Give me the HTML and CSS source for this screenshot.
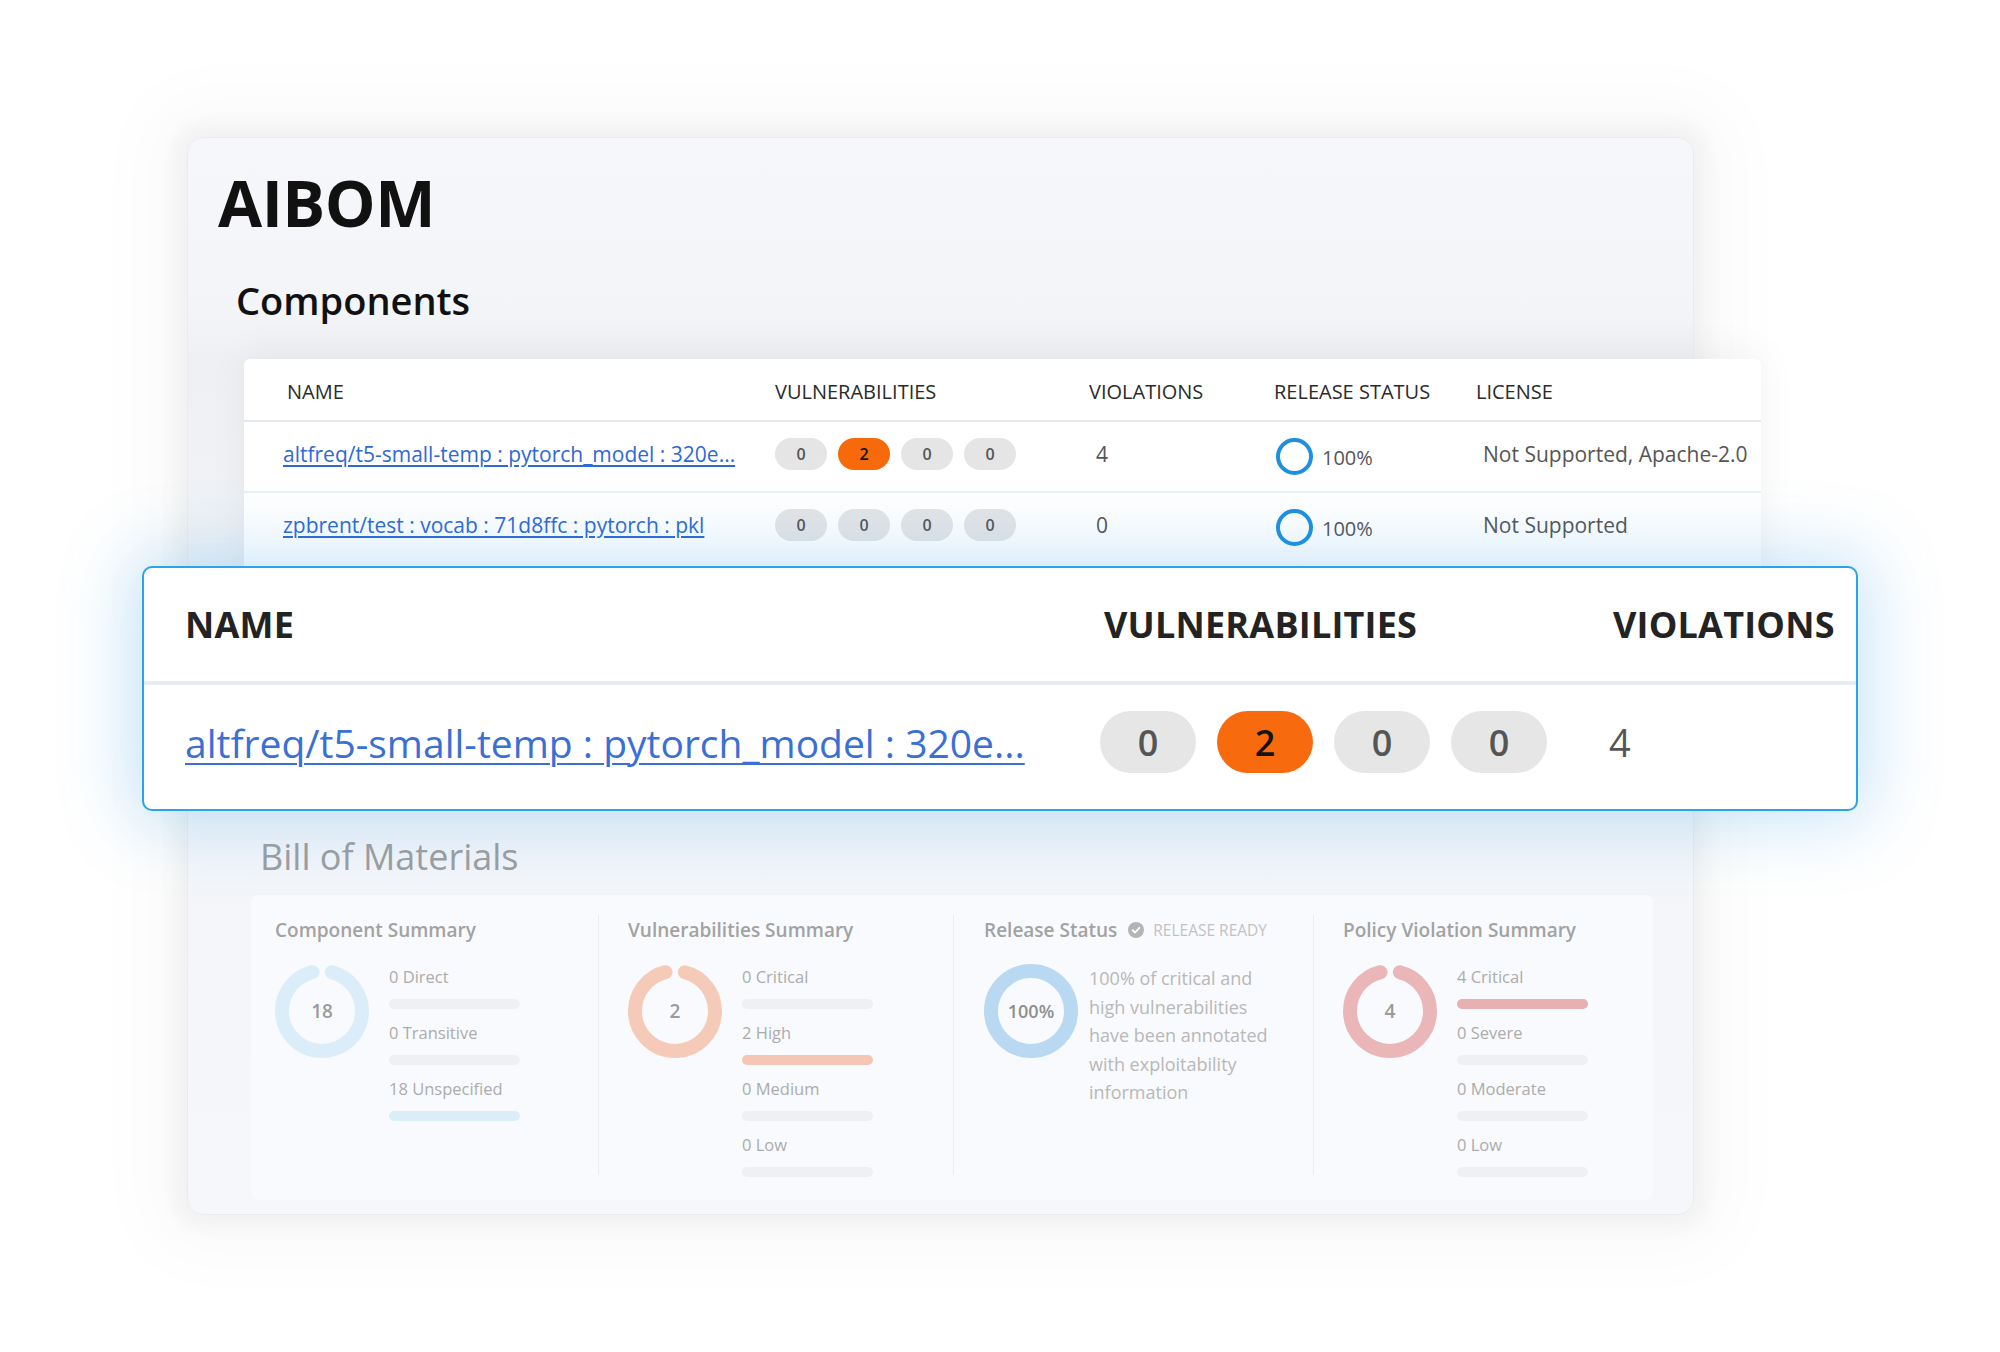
FILE: index.html
```html
<!DOCTYPE html>
<html>
<head>
<meta charset="utf-8">
<link rel="stylesheet" href="styles.css">
</head>
<body>
<div class="stage">
  <div class="main-card">
    <h1 class="title">AIBOM</h1>
    <h2 class="section">Components</h2>
    <div class="table-card">
      <div class="trow thead">
        <div class="th th-name">NAME</div>
        <div class="th">VULNERABILITIES</div>
        <div class="th">VIOLATIONS</div>
        <div class="th">RELEASE STATUS</div>
        <div class="th">LICENSE</div>
      </div>
      <div class="trow tbody first">
        <div class="td"><a class="link">altfreq/t5-small-temp : pytorch_model : 320e...</a></div>
        <div class="td badges"><span class="badge">0</span><span class="badge hot">2</span><span class="badge">0</span><span class="badge">0</span></div>
        <div class="td num">4</div>
        <div class="td status"><span class="ring"></span><span class="pct">100%</span></div>
        <div class="td lic">Not Supported, Apache-2.0</div>
      </div>
      <div class="trow tbody">
        <div class="td"><a class="link">zpbrent/test : vocab : 71d8ffc : pytorch : pkl</a></div>
        <div class="td badges"><span class="badge">0</span><span class="badge">0</span><span class="badge">0</span><span class="badge">0</span></div>
        <div class="td num">0</div>
        <div class="td status"><span class="ring"></span><span class="pct">100%</span></div>
        <div class="td lic">Not Supported</div>
      </div>
    </div>

    <h2 class="bom-title">Bill of Materials</h2>
    <div class="bom-panel">
      <div class="bom-col c1">
        <div class="col-title">Component Summary</div>
        <div class="col-body">
          <div class="donut">
            <svg viewBox="0 0 94 94" width="94" height="94"><circle cx="47" cy="47" r="40" class="arc gap" stroke="#dcedfa"/></svg>
            <span class="dnum">18</span>
          </div>
          <div class="legend">
            <div class="lg">0 Direct</div><div class="bar"></div>
            <div class="lg">0 Transitive</div><div class="bar"></div>
            <div class="lg">18 Unspecified</div><div class="bar blue"></div>
          </div>
        </div>
      </div>
      <div class="bom-col c2">
        <div class="col-title">Vulnerabilities Summary</div>
        <div class="col-body">
          <div class="donut">
            <svg viewBox="0 0 94 94" width="94" height="94"><circle cx="47" cy="47" r="40" class="arc gap" stroke="#f6cab9"/></svg>
            <span class="dnum">2</span>
          </div>
          <div class="legend">
            <div class="lg">0 Critical</div><div class="bar"></div>
            <div class="lg">2 High</div><div class="bar salmon"></div>
            <div class="lg">0 Medium</div><div class="bar"></div>
            <div class="lg">0 Low</div><div class="bar"></div>
          </div>
        </div>
      </div>
      <div class="bom-col c3">
        <div class="col-title">Release Status
          <span class="check"><svg viewBox="0 0 16 16" width="16" height="16"><circle cx="8" cy="8" r="8" fill="#b4b4b4"/><path d="M4.6 8.2 L7 10.5 L11.4 5.8" fill="none" stroke="#fff" stroke-width="1.8" stroke-linecap="round" stroke-linejoin="round"/></svg></span>
          <span class="ready">RELEASE READY</span>
        </div>
        <div class="col-body">
          <div class="donut">
            <svg viewBox="0 0 94 94" width="94" height="94"><circle cx="47" cy="47" r="40" class="arc" stroke="#b9d8f1"/></svg>
            <span class="dnum pc">100%</span>
          </div>
          <p class="note">100% of critical and high vulnerabilities have been annotated with exploitability information</p>
        </div>
      </div>
      <div class="bom-col c4">
        <div class="col-title">Policy Violation Summary</div>
        <div class="col-body">
          <div class="donut">
            <svg viewBox="0 0 94 94" width="94" height="94"><circle cx="47" cy="47" r="40" class="arc gap" stroke="#eab6b8"/></svg>
            <span class="dnum">4</span>
          </div>
          <div class="legend">
            <div class="lg">4 Critical</div><div class="bar pink"></div>
            <div class="lg">0 Severe</div><div class="bar"></div>
            <div class="lg">0 Moderate</div><div class="bar"></div>
            <div class="lg">0 Low</div><div class="bar"></div>
          </div>
        </div>
      </div>
    </div>
  </div>

  <div class="zoom-card">
    <div class="zrow zhead">
      <div class="zth">NAME</div>
      <div class="zth">VULNERABILITIES</div>
      <div class="zth">VIOLATIONS</div>
    </div>
    <div class="zrow zbody">
      <div class="ztd"><a class="zlink">altfreq/t5-small-temp : pytorch_model : 320e...</a></div>
      <div class="ztd zbadges"><span class="zbadge">0</span><span class="zbadge hot">2</span><span class="zbadge">0</span><span class="zbadge">0</span></div>
      <div class="ztd znum">4</div>
    </div>
  </div>
</div>
</body>
</html>
```

FILE: styles.css
```css
* { box-sizing: border-box; }
html, body { margin: 0; padding: 0; background: #ffffff; }
body { font-family: "Open Sans", "Noto Sans", sans-serif; color: #222; }

.stage {
  position: relative;
  width: 2000px;
  height: 1352px;
  overflow: hidden;
  padding: 137px 0 0 187px;
  background: #ffffff;
}

.main-card {
  width: 1507px;
  height: 1078px;
  padding-top: 33px;
  background: linear-gradient(#f5f7fa 0px, #f3f5f9 160px, #eef0f4 222px, #f3f5f9 600px, #f5f7fb 1078px);
  border: 1px solid #e9ebef;
  border-radius: 16px;
  box-shadow: 0 0 18px 14px rgba(0,0,0,0.035), 0 0 70px 40px rgba(0,0,0,0.025);
}

.title {
  margin: 0 0 0 30px;
  font-size: 64px;
  line-height: 64px;
  font-weight: 700;
  color: #111;
  letter-spacing: -0.5px;
}

.section {
  margin: 46px 0 0 48px;
  font-size: 38px;
  line-height: 38px;
  font-weight: 600;
  color: #111;
}

/* Components table */
.table-card {
  margin: 40px 0 0 56px;
  width: 1517px;
  padding-bottom: 40px;
  background: #ffffff;
  border-radius: 6px 6px 0 0;
  box-shadow: 0 -6px 40px rgba(0,0,0,0.05);
}

.trow {
  display: grid;
  grid-template-columns: 492px 314px 185px 202px 1fr;
  padding-left: 39px;
  align-items: center;
}
.thead { height: 63px; padding-top: 4px; border-bottom: 2px solid #e4e9f1; }
.tbody { height: 69px; padding-bottom: 6px; }
.tbody.first { height: 71px; border-bottom: 2px solid #eef1f5; }

.th { font-size: 20px; color: #2b2b2b; }
.th-name { padding-left: 4px; }

.td { font-size: 21px; color: #555; display: flex; align-items: center; }
.link {
  color: #2e69d6;
  text-decoration: underline;
  text-underline-offset: 3px;
  font-size: 21px;
}
.badges { gap: 11px; }
.badge {
  width: 52px;
  height: 32px;
  border-radius: 16px;
  background: #e5e5e6;
  color: #555;
  font-size: 16px;
  font-weight: 600;
  display: flex;
  align-items: center;
  justify-content: center;
}
.badge.hot { background: #f76a0c; color: #111; }
.num { padding-left: 7px; }
.status { padding-left: 2px; gap: 9px; padding-top: 5px; }
.ring {
  width: 37px;
  height: 37px;
  border-radius: 50%;
  border: 4px solid #1f8fe0;
}
.pct { position: relative; top: 1px; color: #555; font-size: 20px; }
.lic { padding-left: 7px; color: #555; }

/* Bill of materials (faded) */
.bom-title {
  margin: 237px 0 0 72px;
  font-size: 36px;
  line-height: 36px;
  font-weight: 400;
  color: #9e9e9e;
}

.bom-panel {
  margin: 20px 0 0 63px;
  width: 1402px;
  height: 305px;
  padding-top: 20px;
  border-radius: 8px;
  background: rgba(250,251,253,0.75);
  display: grid;
  grid-template-columns: 347px 355px 360px 340px;
  align-items: start;
}
.bom-col { height: 260px; }
.c1 { padding-left: 24px; }
.c2 { padding-left: 29px; border-left: 1px solid #eaecef; }
.c3 { padding-left: 30px; border-left: 1px solid #eaecef; }
.c4 { padding-left: 29px; border-left: 1px solid #eaecef; }

.col-title {
  height: 30px;
  display: flex;
  align-items: center;
  font-size: 19px;
  font-weight: 600;
  color: #a2a2a2;
  white-space: nowrap;
}
.check { display: flex; margin-left: 11px; }
.ready { margin-left: 9px; font-size: 15.5px; font-weight: 400; color: #c2c2c2; }

.col-body { display: flex; margin-top: 19px; }

.donut {
  display: grid;
  width: 94px;
  height: 94px;
  flex: none;
}
.donut svg, .donut .dnum { grid-area: 1 / 1; }
.donut .dnum {
  place-self: center;
  font-size: 19px;
  font-weight: 600;
  color: #9a9a9a;
}
.donut .dnum.pc { font-size: 18px; color: #8f8f8f; }
.arc {
  fill: none;
  stroke-width: 14;
  transform: rotate(-90deg);
  transform-origin: 47px 47px;
}
.arc.gap {
  stroke-dasharray: 231.3 20;
  stroke-dashoffset: -10;
  stroke-linecap: round;
}

.legend { margin-left: 20px; padding-top: 3px; }
.lg { height: 20px; line-height: 20px; font-size: 16.5px; color: #acacac; white-space: nowrap; }
.bar {
  width: 131px;
  height: 10px;
  border-radius: 5px;
  background: #eef0f3;
  margin: 12px 0 14px;
}
.bar.blue { background: #dcedfa; }
.bar.salmon { background: #f6c6b4; }
.bar.pink { background: #e7b1b4; }

.note {
  margin: 0 0 0 11px;
  width: 200px;
  font-size: 18px;
  line-height: 28.5px;
  color: #b8b8b8;
}

/* zoomed overlay card */
.zoom-card {
  position: absolute;
  left: 142px;
  top: 566px;
  width: 1716px;
  height: 245px;
  background: #ffffff;
  border: 2px solid #2aa3ea;
  border-radius: 10px;
  box-shadow: 0 0 70px 12px rgba(45,155,230,0.26);
}
.zrow {
  display: grid;
  grid-template-columns: 919px 509px 1fr;
  padding-left: 41px;
  align-items: center;
}
.zhead { height: 117px; border-bottom: 4px solid #e7ecf3; }
.zbody { height: 124px; padding-bottom: 10px; }
.zth { font-size: 36px; font-weight: 700; color: #232323; letter-spacing: 0.2px; }
.ztd { display: flex; align-items: center; }
.zlink {
  font-size: 39px;
  color: #3a6fd4;
  text-decoration: underline;
  text-decoration-thickness: 2px;
  text-underline-offset: 5px;
}
.zbadges { gap: 21px; margin-left: -4px; }
.zbadge {
  width: 96px;
  height: 62px;
  border-radius: 31px;
  background: #e6e6e7;
  color: #555;
  font-size: 36px;
  font-weight: 600;
  display: flex;
  align-items: center;
  justify-content: center;
}
.zbadge.hot { background: #f86a0e; color: #141414; }
.znum { margin-left: -4px; font-size: 38px; color: #555; }
```
